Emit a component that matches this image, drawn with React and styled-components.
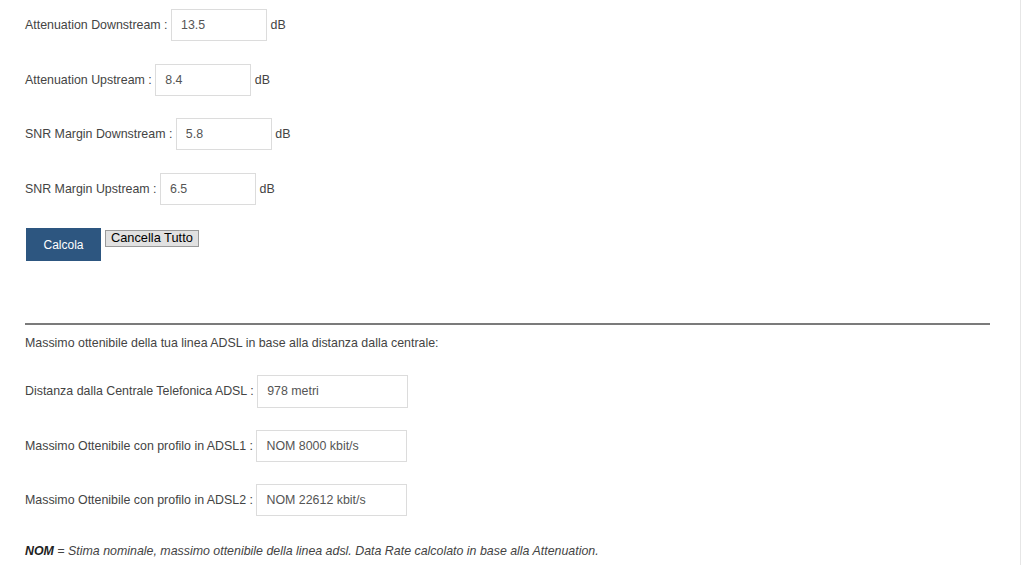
import styled, { createGlobalStyle } from 'styled-components'

const GlobalStyle = createGlobalStyle`
  html, body {
    margin: 0;
    padding: 0;
    background: #fff;
  }
  body {
    font-family: "Liberation Sans", Arial, sans-serif;
    font-size: 12.4px;
    color: #444;
  }
`

const Page = styled.div`
  width: 1021px;
  height: 565px;
  box-sizing: border-box;
  border-right: 1px solid #e6e6e6;
  padding: 9px 0 0 25px;
  overflow: hidden;
`

const Section = styled.div`
  width: 965px;
  display: flex;
  flex-direction: column;
  gap: 22.7px;
`

const Row = styled.div`
  display: flex;
  align-items: center;
  gap: 3.5px;
  height: ${p => (p.$tall ? 33 : 32)}px;
`

const Label = styled.span`
  white-space: nowrap;
`

const Field = styled.input`
  box-sizing: border-box;
  width: ${p => p.$width}px;
  height: 100%;
  border: 1px solid #dcdcdc;
  padding: 0 9px;
  font-family: inherit;
  font-size: 12.4px;
  color: #555;
  background: #fff;
  outline: none;
`

const Unit = styled.span``

const Buttons = styled.div`
  display: flex;
  align-items: flex-start;
  gap: 4px;
  margin-left: 1px;
`

const PrimaryButton = styled.button`
  width: 75px;
  height: 33px;
  border: none;
  background: #2d5680;
  color: #fff;
  font-family: inherit;
  font-size: 12px;
  padding: 2px 0 0;
`

const PlainButton = styled.button`
  margin-top: 2px;
  height: 17px;
  padding: 0 5px;
  border: 1px solid #9a9a9a;
  background: #e1e1e1;
  color: #000;
  font-family: inherit;
  font-size: 12.8px;
  line-height: 14px;
`

const Rule = styled.hr`
  width: 965px;
  margin: 62px 0 0;
  border: none;
  border-top: 2px solid #7b7b7b;
  height: 0;
`

const Intro = styled.p`
  margin: 10px 0 0;
  line-height: 16px;
`

const Results = styled(Section)`
  margin-top: 24px;
  gap: 22px;
`

const Note = styled.p`
  margin: 27px 0 0;
  font-size: 12.4px;
  font-style: italic;
  line-height: 16px;

  strong {
    font-weight: bold;
    color: #222;
  }
`

const inputs = [
  { label: 'Attenuation Downstream :', value: '13.5' },
  { label: 'Attenuation Upstream :', value: '8.4' },
  { label: 'SNR Margin Downstream :', value: '5.8' },
  { label: 'SNR Margin Upstream :', value: '6.5' },
]

const results = [
  { label: 'Distanza dalla Centrale Telefonica ADSL :', value: '978 metri', tall: true },
  { label: 'Massimo Ottenibile con profilo in ADSL1 :', value: 'NOM 8000 kbit/s' },
  { label: 'Massimo Ottenibile con profilo in ADSL2 :', value: 'NOM 22612 kbit/s' },
]

export default function App() {
  return (
    <Page>
      <GlobalStyle />
      <Section>
        {inputs.map(r => (
          <Row key={r.label}>
            <Label>{r.label}</Label>
            <Field $width={96} defaultValue={r.value} />
            <Unit>dB</Unit>
          </Row>
        ))}
        <Buttons>
          <PrimaryButton>Calcola</PrimaryButton>
          <PlainButton>Cancella Tutto</PlainButton>
        </Buttons>
      </Section>

      <Rule />
      <Intro>Massimo ottenibile della tua linea ADSL in base alla distanza dalla centrale:</Intro>

      <Results>
        {results.map(r => (
          <Row key={r.label} $tall={r.tall}>
            <Label>{r.label}</Label>
            <Field $width={151} defaultValue={r.value} readOnly />
          </Row>
        ))}
      </Results>

      <Note>
        <strong>NOM</strong> = Stima nominale, massimo ottenibile della linea adsl. Data Rate calcolato in base alla Attenuation.
      </Note>
    </Page>
  )
}
